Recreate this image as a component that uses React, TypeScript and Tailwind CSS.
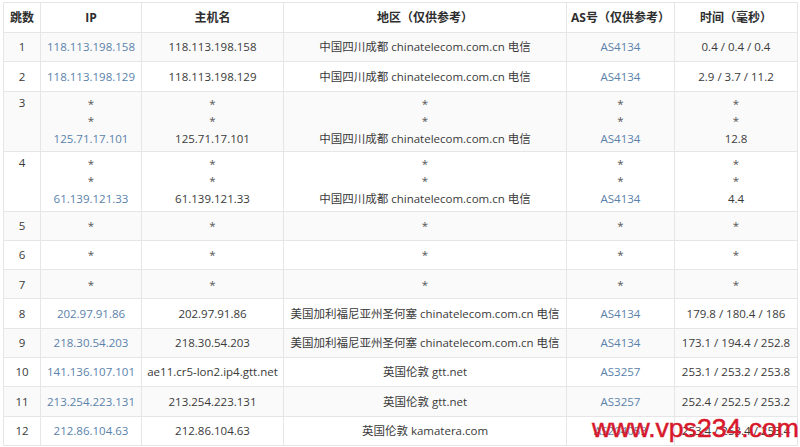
import React from "react";

type Row = {
  hop: string;
  ip: string[];
  host: string[];
  loc: string[];
  as: string[];
  time: string[];
};

const S = "*";
const rows: Row[] = [
  { hop: "1", ip: ["118.113.198.158"], host: ["118.113.198.158"], loc: ["中国四川成都 chinatelecom.com.cn 电信"], as: ["AS4134"], time: ["0.4 / 0.4 / 0.4"] },
  { hop: "2", ip: ["118.113.198.129"], host: ["118.113.198.129"], loc: ["中国四川成都 chinatelecom.com.cn 电信"], as: ["AS4134"], time: ["2.9 / 3.7 / 11.2"] },
  { hop: "3", ip: [S, S, "125.71.17.101"], host: [S, S, "125.71.17.101"], loc: [S, S, "中国四川成都 chinatelecom.com.cn 电信"], as: [S, S, "AS4134"], time: [S, S, "12.8"] },
  { hop: "4", ip: [S, S, "61.139.121.33"], host: [S, S, "61.139.121.33"], loc: [S, S, "中国四川成都 chinatelecom.com.cn 电信"], as: [S, S, "AS4134"], time: [S, S, "4.4"] },
  { hop: "5", ip: [S], host: [S], loc: [S], as: [S], time: [S] },
  { hop: "6", ip: [S], host: [S], loc: [S], as: [S], time: [S] },
  { hop: "7", ip: [S], host: [S], loc: [S], as: [S], time: [S] },
  { hop: "8", ip: ["202.97.91.86"], host: ["202.97.91.86"], loc: ["美国加利福尼亚州圣何塞 chinatelecom.com.cn 电信"], as: ["AS4134"], time: ["179.8 / 180.4 / 186"] },
  { hop: "9", ip: ["218.30.54.203"], host: ["218.30.54.203"], loc: ["美国加利福尼亚州圣何塞 chinatelecom.com.cn 电信"], as: ["AS4134"], time: ["173.1 / 194.4 / 252.8"] },
  { hop: "10", ip: ["141.136.107.101"], host: ["ae11.cr5-lon2.ip4.gtt.net"], loc: ["英国伦敦 gtt.net"], as: ["AS3257"], time: ["253.1 / 253.2 / 253.8"] },
  { hop: "11", ip: ["213.254.223.131"], host: ["213.254.223.131"], loc: ["英国伦敦 gtt.net"], as: ["AS3257"], time: ["252.4 / 252.5 / 253.2"] },
  { hop: "12", ip: ["212.86.104.63"], host: ["212.86.104.63"], loc: ["英国伦敦 kamatera.com"], as: ["AS204053"], time: ["253.4 / 253.4 / 253.4"] },
];

const font = { fontFamily: '"Open Sans", "Noto Sans CJK SC", sans-serif' };

function Lines({ items, link }: { items: string[]; link?: boolean }) {
  return (
    <div className="flex flex-col items-center">
      {items.map((t, i) => (
        <div
          key={i}
          className={
            "h-[17.5px] leading-[17.5px] whitespace-nowrap " +
            (t === S ? "text-[#555]" : link ? "text-[#5a82ab]" : "text-[#3a3a3a]")
          }
        >
          {t}
        </div>
      ))}
    </div>
  );
}

const cell = "border border-[#e6e6e6] p-0 align-middle";

export default function App() {
  return (
    <div className="w-[800px] h-[447px] bg-white relative overflow-hidden" style={font}>
      <div className="pt-[2px] pl-[3px]">
        <table className="table-fixed border-collapse w-[794px] text-[11.5px] border border-[#e6e6e6]">
          <colgroup>
            <col className="w-[37px]" />
            <col className="w-[101px]" />
            <col className="w-[142px]" />
            <col className="w-[283px]" />
            <col className="w-[108px]" />
            <col className="w-[123px]" />
          </colgroup>
          <thead>
            <tr className="h-[30px] bg-white">
              {["跳数", "IP", "主机名", "地区（仅供参考）", "AS号（仅供参考）", "时间（毫秒）"].map((h) => (
                <th key={h} className="border border-[#e6e6e6] font-bold text-[#2e2e2e] text-center p-0 text-[12px]">
                  {h}
                </th>
              ))}
            </tr>
          </thead>
          <tbody>
            {rows.map((r, i) => {
              const multi = r.ip.length > 1;
              return (
                <tr
                  key={r.hop}
                  className={(multi ? "h-[60px] " : "h-[29.3px] ") + (i % 2 === 0 ? "bg-[#fafafa]" : "bg-white")}
                >
                  <td className={cell + " text-center text-[#3a3a3a]"} style={multi ? { verticalAlign: "top", paddingTop: 2 } : undefined}>
                    <div className="h-[17.5px] leading-[17.5px]">{r.hop}</div>
                  </td>
                  <td className={cell}>
                    <Lines items={r.ip} link />
                  </td>
                  <td className={cell}>
                    <Lines items={r.host} />
                  </td>
                  <td className={cell}>
                    <Lines items={r.loc} />
                  </td>
                  <td className={cell}>
                    <Lines items={r.as} link />
                  </td>
                  <td className={cell}>
                    <Lines items={r.time} />
                  </td>
                </tr>
              );
            })}
          </tbody>
        </table>
      </div>
      <div
        className="absolute left-[592px] top-[413px] text-[26.6px] leading-[30px] text-[#d8182b] whitespace-nowrap"
        style={{ fontFamily: '"Liberation Sans", Arial, sans-serif', WebkitTextStroke: "0.5px #d8182b" }}
      >
        www.vps234.com
      </div>
    </div>
  );
}
